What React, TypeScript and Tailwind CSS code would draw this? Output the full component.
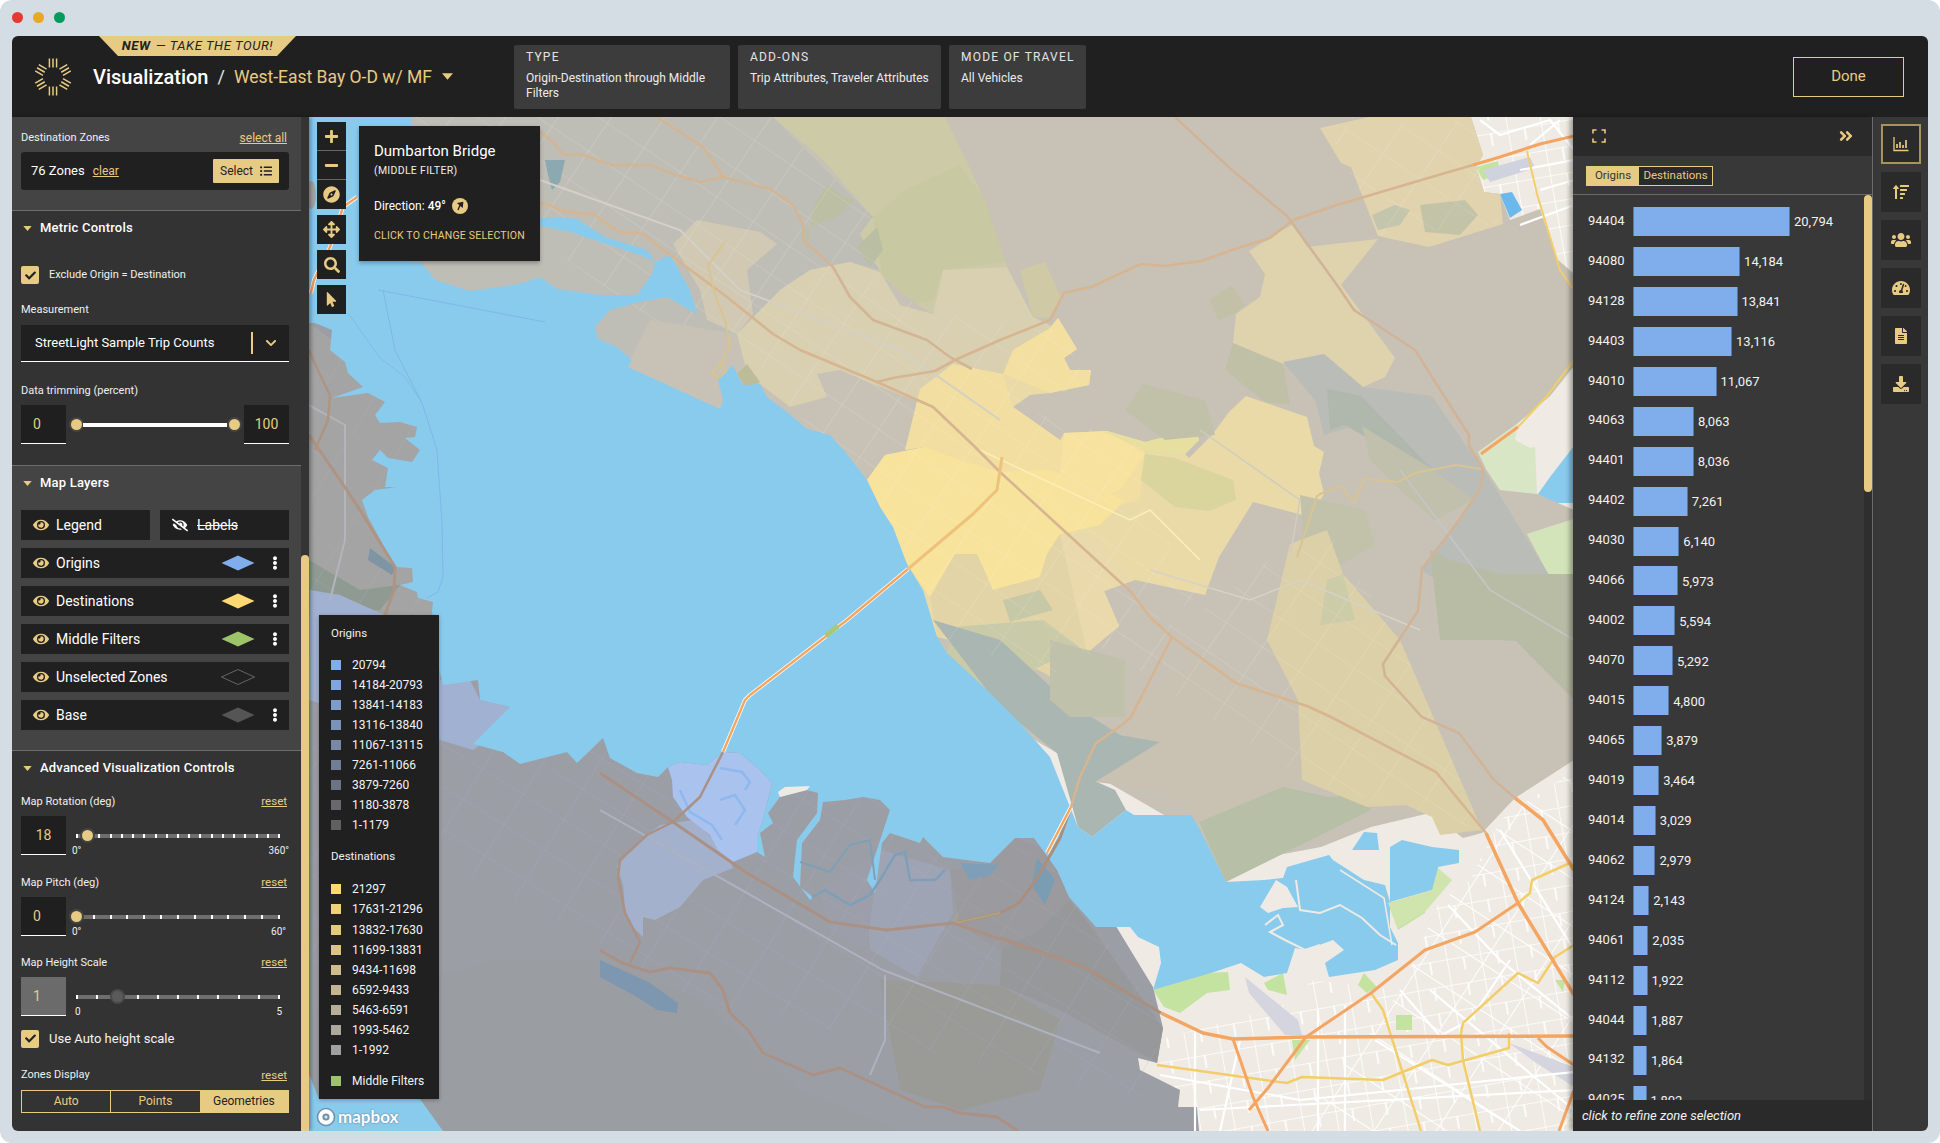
import { ReactNode } from "react";
import {
  FaPlus, FaMinus, FaCompass, FaArrowsAlt, FaSearch, FaMousePointer, FaEye, FaEyeSlash,
  FaEllipsisV, FaCheck, FaChevronDown, FaListUl, FaAngleDoubleRight, FaSortAmountUp,
  FaUsers, FaTachometerAlt, FaFileAlt, FaDownload,
} from "react-icons/fa";

const water =
  "309,117 412,117 412,262 421,262 435,280 470,291 520,284 540,277 557,289 600,295 637,295 652,274 655,262 670,255 690,290 697,314 667,297 640,302 610,310 595,327 598,339 617,347 632,360 628,367 720,409 723,400 718,380 733,365 737,374 743,385 760,384 767,397 787,412 807,429 830,435 847,454 867,480 880,507 893,527 907,564 923,590 937,637 947,653 990,693 1017,720 1050,757 1078,827 1092,837 1126,810 1134,815 1191,815 1199,828 1226,882 1264,880 1283,878 1287,867 1329,855 1333,860 1364,880 1385,885 1390,902 1432,890 1438,885 1438,867 1459,863 1459,850 1432,847 1402,840 1390,847 1390,927 1398,943 1398,960 1375,970 1329,977 1325,963 1344,950 1333,940 1306,950 1295,948 1287,973 1264,977 1241,963 1214,972 1153,990 1161,963 1159,947 1138,937 1130,927 1096,927 1078,907 1069,897 1057,870 1034,838 1015,838 990,863 943,857 923,837 920,843 890,833 882,843 875,893 867,880 890,810 880,800 863,797 845,800 823,802 820,820 802,843 800,887 813,897 810,900 793,877 797,840 817,813 818,793 807,790 780,797 768,813 773,823 760,833 765,857 757,852 757,837 763,820 772,783 760,770 740,753 723,752 707,765 680,762 668,767 658,777 637,773 610,758 603,738 577,763 567,752 520,764 503,752 473,744 510,707 480,700 478,680 443,685 439,669 436,640 432,612 433,602 418,598 417,592 400,585 413,582 412,568 395,567 368,517 362,500 375,490 397,487 385,487 388,468 372,460 380,450 388,458 412,462 420,450 405,438 415,437 417,427 400,422 380,423 375,415 385,402 368,393 332,398 363,387 348,373 345,362 330,350 332,330 315,323 309,323";

const hills =
  "309,117 1471,117 1483,155 1476,167 1484,192 1500,194 1510,220 1540,209 1557,259 1574,274 1574,366 1550,396 1518,423 1478,452 1486,469 1500,490 1537,494 1574,510 1574,519 1527,534 1557,590 1574,590 1574,760 1515,798 1482,833 1463,838 1430,813 1371,827 1321,847 1268,857 1226,882 1190,830 1000,720 760,500 600,420 400,300 309,200";

const west =
  "309,300 440,420 440,660 600,700 1030,800 1100,900 1153,987 1163,1028 1157,1063 1138,1058 1140,1070 1180,1090 1178,1107 1197,1107 1199,1131 309,1131";

const zones: [string, string][] = [
  // north, oakland side
  ["412,117 773,117 873,217 880,270 850,262 810,270 780,290 737,334 650,320 600,420 400,300", "#bfbeb6"],
  ["773,117 945,117 980,190 1007,267 943,270 933,314 917,304 883,277 860,234 873,217 823,160", "#cdcaa8"],
  ["873,217 905,190 960,165 985,200 1005,262 943,270 933,300 917,304 883,277", "#c8c8a2"],
  ["673,244 697,220 760,232 777,244 747,270 753,314 737,334 707,320 700,290", "#d1c9b4"],
  ["737,334 780,290 810,270 850,262 880,272 900,305 933,314 943,270 1007,267 1033,317 1060,330 1013,350 1003,374 953,364 920,389 933,407 873,384 840,370 817,374 827,397 790,407 760,384 745,365", "#d9cfb1"],
  ["1020,270 1045,262 1062,300 1050,318 1033,317", "#cfc9a6"],
  ["807,250 803,230 837,217 855,200 842,196 827,184 813,207", "#bcbfa3"],
  ["857,247 877,227 883,250 870,267", "#babea2"],
  ["737,374 747,364 760,382 747,389", "#bdbc98"],
  // yellow destinations
  ["920,389 953,364 1003,374 1013,350 1050,328 1058,318 1077,349 1064,358 1070,370 1091,370 1089,385 1050,393 1030,395 1013,407 1060,440 1064,433 1107,431 1145,442 1195,429 1199,440 1185,454 1189,458 1212,435 1229,412 1246,396 1307,417 1314,446 1324,452 1319,473 1324,494 1310,517 1253,502 1219,557 1205,595 1135,580 1104,591 1119,626 1087,653 1050,676 1000,650 937,637 907,564 867,480 885,455 925,447 933,407", "#e9daa8"],
  ["920,389 953,364 1003,374 1013,407 1060,440 1107,431 1145,442 1140,500 1060,520 960,460 925,447 905,450", "#f2dea0"],
  ["1050,328 1058,318 1077,349 1064,358 1070,370 1091,370 1089,385 1050,393 1003,374 1013,350", "#f3dfa0"],
  ["867,480 885,455 925,447 960,460 1000,472 1050,470 1125,500 1100,525 1060,534 1047,554 1040,577 993,590 977,554 955,554 930,597 907,564", "#f8e39c"],
  ["1064,433 1107,431 1145,454 1120,490 1072,510 1060,470", "#f7e2a0"],
  ["1145,454 1175,458 1233,480 1236,500 1209,511 1175,507 1141,480", "#d9d59d"],
  ["1100,430 1145,442 1195,429 1199,440 1185,454 1150,452", "#e6df9f"],
  ["930,597 955,554 977,554 993,590 1040,577 1047,554 1060,534 1087,560 1087,653 1050,676 985,640 937,637", "#e2d4a7"],
  ["1060,534 1094,538 1135,580 1104,591 1119,626 1087,653", "#ead9aa"],
  ["953,627 1043,620 1080,647 1033,670 1000,670 990,693 947,653", "#c8caa8"],
  ["1003,600 1040,590 1053,610 1010,622", "#c6c8a6"],
  // grey teal salt flats below
  ["933,620 1000,640 1065,700 1120,735 1160,742 1097,782 1115,790 1126,810 1092,837 1078,827 1057,753 1000,707", "#a9b6b2"],
  ["1130,700 1200,660 1250,690 1298,700 1302,780 1199,822 1165,790 1095,782 1160,742 1120,735", "#c9c1b2"],
  ["1199,822 1283,787 1329,797 1360,795 1371,810 1226,882", "#b7c0a6"],
  // upper right tan zones
  ["1320,128 1369,117 1471,117 1483,155 1476,167 1484,192 1500,194 1503,224 1429,247 1378,236 1351,167 1341,163", "#e0d3ae"],
  ["1249,251 1293,224 1307,247 1378,239 1341,285 1395,358 1385,377 1363,387 1324,354 1283,364 1233,343 1236,314 1260,297 1265,274", "#dfd3ae"],
  ["1233,343 1283,364 1290,405 1265,402 1225,370", "#c0c0a6"],
  ["1210,300 1232,285 1245,305 1235,314 1218,320", "#c2c1a8"],
  ["1283,362 1324,354 1363,387 1432,396 1469,450 1486,473 1557,588 1574,611 1574,641 1506,641 1450,590 1420,569 1473,500 1432,469 1358,425 1324,435 1315,400", "#babcb8"],
  ["1327,389 1361,396 1432,469 1405,460 1345,425 1330,430", "#b0b8ae"],
  ["1362,426 1432,469 1473,500 1435,520 1400,490 1370,460", "#c0c0ac"],
  ["1430,550 1450,560 1500,574 1574,574 1574,700 1515,640 1440,640", "#b9bca5"],
  ["1300,495 1365,510 1375,545 1340,565 1305,555", "#c2c2aa"],
  ["1143,384 1205,400 1215,435 1165,440 1125,410", "#c1c1aa"],
  ["1327,530 1343,574 1400,640 1482,830 1440,835 1432,817 1406,805 1367,807 1302,780 1298,700 1267,640 1290,544", "#dcd0a8"],
  ["1327,580 1343,574 1355,620 1320,625", "#cccca8"],
  ["1420,205 1465,200 1478,215 1460,235 1425,232", "#c3c3a8"],
  ["1372,215 1395,205 1410,210 1400,225 1378,230", "#c3c5ad"],
  ["1050,640 1125,660 1125,717 1070,717 1050,700", "#bfc1aa"],
];

const westZones: [string, string][] = [
  ["309,323 440,420 440,640 309,640", "#a4a4a4"],
  ["309,560 360,590 400,585 380,610 309,615", "#8f9b92"],
  ["600,960 700,1000 800,1090 900,1131 309,1131 309,1010 500,960", "#9a9da2"],
  ["880,980 1000,985 1060,1020 1040,1090 960,1110 900,1090", "#9a9b96"],
  ["1020,840 1090,925 1163,1028 1157,1063 1060,1010 1000,985 1005,880", "#97989a"],
  ["950,870 990,863 1015,838 1050,850 1070,900 1040,930 1000,950 960,925", "#9a9a9f"],
  ["880,850 950,870 953,913 917,977 870,950 866,890", "#9fa4b5"],
  ["820,890 880,850 866,950 830,930", "#9c9fa9"],
];

const roads: [string, string, number][] = [
  ["540,132 553,142 563,154 583,155 612,165 650,165 673,174 700,182 723,177 770,189 793,205 803,224 803,240 833,267 850,297 873,320 927,340 950,357 972,369", "#d2b595", 2.6],
  ["657,117 703,147 717,167 723,177", "#d2b595", 2.6],
  ["540,202 567,212 593,214 607,224 620,232 643,234 673,257 727,297 773,334 800,350 877,382 933,407 973,445 1000,472 1060,527 1131,592 1151,618 1172,637 1236,683 1307,706 1331,717 1436,772 1486,833", "#d6b590", 2.6],
  ["877,382 893,378 935,371 955,360 1000,340 1050,320 1064,293 1091,287 1141,264 1165,266 1202,261 1229,251 1270,238 1293,220 1337,205 1435,176 1473,165", "#d6b590", 2.6],
  ["1175,117 1233,171 1287,216 1337,285 1354,310 1415,350 1432,377 1469,435 1469,446 1483,469 1481,488 1452,530 1422,569 1418,611 1383,664 1385,676 1422,717 1459,733 1494,780 1515,798", "#d1b498", 2.6],
  ["1172,637 1131,717 1122,725 1096,743 1080,777 1071,807", "#d6b590", 2.6],
  ["1297,557 1317,496 1320,494 1341,486 1354,503 1364,479 1398,482 1415,473 1456,465 1481,469", "#d8c493", 2],
  ["1002,457 997,490 973,514 908,569", "#efc27c", 3],
  ["725,242 708,265 715,295 725,320 730,345 720,365 712,372 718,378 726,372 722,362", "#d8c48e", 2],
  ["1000,938 1084,967 1161,1013", "#a98f7e", 3],
  ["1071,807 1060,838 1036,880 1019,903 1000,913 955,923", "#a98f7e", 3],
  ["1000,913 955,923 957,915", "#b2a27c", 2],
  ["600,773 673,822 747,873 830,922 887,930 953,923 1083,967 1100,975", "#ab9184", 3],
  ["600,950 622,963 650,972 670,968 710,973 723,990 730,1013 748,1030 763,1053 813,1075 840,1068 925,1107 943,1107 960,1113 997,1117 1018,1131", "#ab9184", 3],
  ["723,752 700,797 673,822 647,835 620,860 618,877 625,913 640,942 630,963", "#ab9184", 2.5],
  ["309,350 320,375 330,395 328,420 315,450", "#ae9482", 2.5],
  ["309,435 340,480 360,510 395,567 394,590 385,615", "#ae9482", 3],
];

const orange: [string, number][] = [
  ["1473,165 1500,157 1540,144 1574,136", 3],
  ["1486,833 1518,903 1574,995", 3.5],
  ["1515,798 1543,820 1574,870", 3.5],
  ["1161,1013 1203,1033 1233,1039 1306,1037 1574,1036", 3.5],
  ["1233,1039 1253,1097 1268,1131", 3],
  ["1306,1037 1268,1088 1249,1110", 3],
  ["1306,1037 1371,993 1425,950 1475,932 1518,903", 3],
  ["1538,1038 1547,1047 1574,1065", 3],
  ["1574,1090 1559,1131", 3],
  ["1481,454 1518,427", 3],
];

const yellow: [string, number][] = [
  ["1527,151 1537,194 1560,270 1574,290", 2],
  ["1518,427 1547,396 1574,360", 2],
  ["1157,1065 1287,1083 1302,1077 1383,1080 1432,1060 1448,1065 1509,1048 1509,1033", 2.5],
  ["1371,993 1383,1010 1421,1131", 2.5],
  ["1461,1033 1463,1023 1518,973 1538,983 1555,957 1574,945", 2.5],
  ["1461,1033 1463,1060 1480,1131", 2.5],
  ["1570,863 1532,880 1530,893 1518,903", 2.5],
];

const whiteRoads = [
  "1160,1075 1300,1100 1400,1090 1574,1072",
  "1195,1028 1195,1131", "1240,1040 1220,1131", "1318,1010 1318,1131", "1345,1005 1345,1131",
  "1375,1040 1520,1131", "1430,990 1574,1110", "1400,990 1440,1036 1470,1020 1510,960",
  "1448,905 1500,960 1574,1020", "1500,830 1574,950", "1200,1110 1574,1090",
  "1480,120 1500,135 1550,120 1574,150", "1540,190 1574,180", "1520,170 1574,160", "1520,225 1574,205", "1560,120 1530,145",
];

const greens = [
  "1153,990 1203,973 1228,972 1230,990 1207,993 1180,1013 1164,1007",
  "1264,983 1283,973 1287,995 1268,990",
  "1364,973 1377,987 1367,993 1358,985",
  "1388,903 1429,893 1425,913 1398,930",
  "1292,1040 1310,1040 1295,1060",
  "1396,1015 1412,1015 1412,1030 1396,1030",
  "1476,167 1498,161 1500,174 1483,180",
  "1530,300 1536,300 1536,312 1530,312",
  "1555,980 1565,980 1563,992",
];

const Map = () => (
  <svg viewBox="309 117 1264 1014" className="absolute inset-0 w-full h-full">
    <defs>
      <pattern id="streets" width="34" height="26" patternUnits="userSpaceOnUse" patternTransform="rotate(-10)">
        <path d="M0 0H34M0 0V26M17 0V13" stroke="#fff" strokeWidth="1.6" fill="none" />
      </pattern>
      <pattern id="streetsB" width="52" height="40" patternUnits="userSpaceOnUse" patternTransform="rotate(33)">
        <path d="M0 0H52M0 0V40" stroke="#fff" strokeWidth="1.8" fill="none" />
      </pattern>
      <pattern id="pale" width="44" height="34" patternUnits="userSpaceOnUse" patternTransform="rotate(34)">
        <path d="M0 0H44M0 0V34" stroke="#fff" strokeOpacity=".2" strokeWidth="1.2" fill="none" />
      </pattern>
      <pattern id="slate" width="48" height="36" patternUnits="userSpaceOnUse" patternTransform="rotate(32)">
        <path d="M0 0H48M0 0V36" stroke="#adb2c2" strokeOpacity=".35" strokeWidth="1.2" fill="none" />
      </pattern>
    </defs>
    <rect x="309" y="117" width="1264" height="1014" fill="#efebe4" />
    <polygon points="1160,1040 1300,1000 1310,980 1400,990 1440,900 1470,880 1500,820 1574,770 1574,1131 1160,1131" fill="url(#streets)" />
    <polygon points="1400,990 1440,900 1470,880 1500,820 1574,770 1574,1131 1300,1131" fill="url(#streetsB)" />
    <polygon points="1471,117 1574,117 1574,274 1557,259 1540,209 1510,220 1500,194 1484,192" fill="url(#streets)" />
    <polygon points="1518,423 1574,360 1574,400 1545,425 1535,443 1537,494 1500,490 1486,469 1478,452" fill="#d9e6c6" />
    <polygon points="1518,423 1550,396 1574,366 1574,440 1545,445 1530,448 1515,440" fill="#efebe4" />
    <polygon points="1527,534 1574,519 1574,590 1557,590" fill="#d3e4bb" />
    <polygon points="1538,494 1550,477 1574,446 1574,503 1544,503" fill="#89cbed" />
    {greens.map((p, i) => <polygon key={i} points={p} fill="#c5e3a0" />)}
    <polygon points="1245,977 1298,1020 1302,1035 1285,1035 1249,993" fill="#d4d5df" />
    <polygon points="1509,1043 1574,1067 1574,1087 1536,1063" fill="#d4d5df" />
    <polygon points="1483,170 1530,157 1535,168 1490,182" fill="#cfd3de" />
    <polygon points="1500,194 1512,192 1522,210 1510,218" fill="#6bb9ec" />

    <polygon points={hills} fill="#c8c2b6" />
    {zones.map(([p, c], i) => <polygon key={i} points={p} fill={c} />)}
    <polygon points="540,240 412,230 412,117 773,117 873,217 880,270 810,270 737,334 650,320" fill="url(#pale)" />
    <polygon points="737,334 780,290 850,262 933,314 1060,330 1089,385 1013,407 1145,442 1140,500 1205,595 1050,676 937,637 867,480 790,407" fill="url(#pale)" />
    <polygon points="1290,544 1327,530 1400,640 1482,830 1302,780 1180,700 1100,640 1190,620" fill="url(#pale)" />
    <polygon points="1330,130 1471,117 1500,224 1378,236" fill="url(#pale)" />

    <polygon points={west} fill="#9c9ea6" />
    {westZones.map(([p, c], i) => <polygon key={i} points={p} fill={c} />)}
    <polygon points="309,323 440,420 440,1000 309,1000" fill="url(#slate)" />
    <polygon points="440,660 600,700 1030,810 1160,1020 1150,1100 700,1000 440,860" fill="url(#slate)" />
    <polygon points="640,840 660,825 693,820 725,850 733,868 703,880 680,907 655,920 643,917 643,937 633,927 625,910 623,885 617,866" fill="#a3b1cd" />
    <polygon points="310,590 340,595 440,640 440,680 470,680 480,700 510,707 480,745 473,750 440,740 309,700" fill="#a1b1d1" />
    <polygon points="668,767 680,762 707,765 723,752 740,753 760,770 772,783 763,820 757,837 757,852 733,862 718,850 710,835 687,817 673,797 672,780" fill="#a9c3ee" />

    <polygon points={water} fill="#89cbed" />
    <polygon points="309,1074 319,1099 420,1099 443,1131 309,1131" fill="#89cbed" />
    <polyline points="720,768 742,772 750,782 745,790" fill="none" stroke="#8fb9ee" strokeWidth="2.5" />
    <polyline points="680,790 690,812 712,825 722,840" fill="none" stroke="#8fb9ee" strokeWidth="2.5" />
    <polyline points="720,800 735,795 745,810 735,825" fill="none" stroke="#8fb9ee" strokeWidth="2.5" />
    <polygon points="1260,907 1276,880 1287,887 1298,907 1283,908 1268,913" fill="#efebe4" />
    <polygon points="1352,850 1364,832 1377,833 1379,850" fill="#89cbed" />
    <polygon points="1388,903 1432,890 1438,868 1452,880 1425,912 1398,928" fill="#cfe5ad" />
    <polygon points="780,797 807,790 810,786 785,787 778,792" fill="#efebe4" />
    <polyline points="1296,880 1300,910 1320,913 1340,905 1362,918 1380,935 1396,945" fill="none" stroke="#efebe4" strokeWidth="2" />
    <polyline points="1265,925 1278,915 1283,925 1270,932 1285,940 1305,950 1320,945" fill="none" stroke="#efebe4" strokeWidth="2" />
    <polyline points="1340,870 1384,898 1392,945" fill="none" stroke="#efebe4" strokeWidth="1.5" />
    <polyline points="383,290 395,350 422,403 437,450 442,523 443,577 438,592 427,598" fill="none" stroke="#7fb8e4" strokeWidth="1" />
    <polyline points="378,290 545,322" fill="none" stroke="#7fb8e4" strokeWidth="1" />
    <polyline points="348,313 380,358 405,377 422,403" fill="none" stroke="#7fb8e4" strokeWidth=".8" />
    <polygon points="600,960 650,983 678,1003 677,1013 657,1010 637,997 600,977" fill="#7e97b0" />
    <polygon points="1037,858 1055,880 1045,905 1032,885" fill="#7b9db3" />
    <polygon points="370,548 395,567 392,575 368,560" fill="#7e95a4" />
    <polyline points="800,862 830,872 850,845 870,840 875,880" fill="none" stroke="#7f9fb9" strokeWidth="2" />
    <polyline points="812,897 825,890 850,905 870,895 880,880 895,855 905,852 910,880 935,880 945,870" fill="none" stroke="#7f9fb9" strokeWidth="2.5" />
    <polygon points="960,863 1000,865 990,875 970,880" fill="#7f9fb9" />
    <polygon points="560,217 577,219 605,237 647,250 655,262 640,255 600,242 570,232 540,226 540,218" fill="#89cbed" />
    <polygon points="545,160 565,160 560,182 552,190 548,175" fill="#8ca9b2" />

    <polyline points="600,810 883,970 1100,1053" fill="none" stroke="#adb2c0" strokeWidth="2" />
    <polyline points="309,405 345,425 345,540 330,600" fill="none" stroke="#b3b4bc" strokeWidth="2" />
    <polyline points="885,975 885,1040 870,1075" fill="none" stroke="#adb2c0" strokeWidth="2" />
    <polyline points="540,180 680,230 740,290 900,350 1000,420" fill="none" stroke="#d3d0c6" strokeWidth="2" />
    <polyline points="1400,470 1490,590 1574,640" fill="none" stroke="#c5c6c8" strokeWidth="1.5" />
    <polyline points="1150,570 1250,600 1300,580 1420,630" fill="none" stroke="#d6d2c5" strokeWidth="1.5" />
    <polyline points="1200,430 1300,500 1290,555" fill="none" stroke="#d0ccc0" strokeWidth="1.5" />
    <polyline points="980,450 1130,520 1150,510 1200,560" fill="none" stroke="#fbeeb9" strokeWidth="1.5" />

    {whiteRoads.map((p, i) => <polyline key={i} points={p} fill="none" stroke="#fff" strokeWidth="2.2" />)}
    {roads.map(([p, c, w], i) => <polyline key={i} points={p} fill="none" stroke={c} strokeWidth={w} strokeLinejoin="round" />)}
    {yellow.map(([p, w], i) => <polyline key={i} points={p} fill="none" stroke="#f2cd68" strokeWidth={w} strokeLinejoin="round" />)}
    {orange.map(([p, w], i) => <polyline key={i} points={p} fill="none" stroke="#f4a562" strokeWidth={w} strokeLinejoin="round" />)}

    <polyline points="723,752 745,700 750,695 847,620 908,569" fill="none" stroke="#fff" strokeWidth="4" strokeLinejoin="round" />
    <polyline points="723,752 745,700 750,695 847,620 908,569" fill="none" stroke="#f2a55e" strokeWidth="2.4" strokeLinejoin="round" />
    <polyline points="826,636 838,626" fill="none" stroke="#a7c878" strokeWidth="5" />
    <polyline points="1047,853 1071,807" fill="none" stroke="#fff" strokeWidth="4" />
    <polyline points="1047,853 1071,807" fill="none" stroke="#f2a55e" strokeWidth="2.4" />
    <polyline points="357,197 343,207 330,247 314,280 311,293" fill="none" stroke="#fff" strokeWidth="4" />
    <polyline points="357,197 343,207 330,247 314,280 311,293" fill="none" stroke="#ee9f62" strokeWidth="2.5" />
    <ellipse cx="311" cy="195" rx="5" ry="14" fill="#a4a4a4" />
  </svg>
);

const Gold = "#e8cb83";

const Caret = ({ className = "" }: { className?: string }) => (
  <svg viewBox="0 0 10 6" className={className}><polygon points="0,0 10,0 5,6" fill={Gold} /></svg>
);

const Logo = () => (
  <svg viewBox="-18 -18 36 36" className="w-[38px] h-[38px] shrink-0">
    {[0, 60, 120, 180, 240, 300].map((a) => (
      <g key={a} transform={`rotate(${a})`} stroke={Gold} strokeWidth="1.4">
        <line x1="-3.4" y1="-17.5" x2="-3.4" y2="-9" />
        <line x1="0" y1="-17.5" x2="0" y2="-9" />
        <line x1="3.4" y1="-17.5" x2="3.4" y2="-9" />
      </g>
    ))}
  </svg>
);

const InfoCard = ({ w, title, children }: { w: string; title: string; children: ReactNode }) => (
  <div className={`${w} h-[64px] bg-[#3c3c3c] rounded-[2px] pl-[12px] pt-[5px]`}>
    <div className="text-[12px] leading-[14px] tracking-[1.2px] text-[#e4e4e4] whitespace-nowrap">{title}</div>
    <div className="mt-[7px] text-[12px] leading-[15px] text-[#ececec] pr-[8px]">{children}</div>
  </div>
);

const Header = () => (
  <header className="relative h-[81px] bg-[#202020] flex items-center shrink-0">
    <svg viewBox="0 0 197 20" className="absolute left-[87px] top-0 w-[197px] h-[20px]"><polygon points="0,0 197,0 178,20 19,20" fill={Gold} /></svg>
    <div className="absolute left-[87px] top-0 w-[197px] h-[20px] flex items-center justify-center text-[13px] italic tracking-[.6px] text-[#222]">
      <b className="font-bold mr-[5px]">NEW</b> — TAKE THE TOUR!
    </div>
    <div className="ml-[22px]"><Logo /></div>
    <div className="ml-[21px] w-[421px] flex items-center">
      <span className="text-[20px] font-medium text-white">Visualization</span>
      <span className="ml-[9px] text-[18px] text-[#e6e6e6]">/</span>
      <span className="ml-[9px] mt-[1px] text-[17.5px] text-[#e8cb83]">West-East Bay O-D w/ MF</span>
      <Caret className="ml-[10px] w-[11px] h-[7px]" />
    </div>
    <div className="flex gap-[8px]">
      <InfoCard w="w-[216px]" title="TYPE">Origin-Destination through Middle Filters</InfoCard>
      <InfoCard w="w-[203px]" title="ADD-ONS"><span className="whitespace-nowrap">Trip Attributes, Traveler Attributes</span></InfoCard>
      <InfoCard w="w-[137px]" title="MODE OF TRAVEL">All Vehicles</InfoCard>
    </div>
    <button className="ml-auto mr-[24px] w-[111px] h-[40px] border border-[#e8cb83] text-[15px] text-[#e8cb83]">Done</button>
  </header>
);

const Check = ({ className = "" }: { className?: string }) => (
  <div className={`w-[18px] h-[18px] rounded-[2px] bg-[#e8cb83] flex items-center justify-center shrink-0 ${className}`}>
    <FaCheck className="text-[#222] text-[11px]" />
  </div>
);

const SectionHead = ({ title }: { title: string }) => (
  <div className="h-[18px] flex items-center">
    <Caret className="w-[9px] h-[5px] ml-[2px]" />
    <span className="ml-[8px] text-[13px] font-medium tracking-[.2px] text-white">{title}</span>
  </div>
);

const LabelRow = ({ label, link, className = "" }: { label: string; link: string; className?: string }) => (
  <div className={`h-[14px] flex items-center justify-between text-[11px] text-[#f0f0f0] ${className}`}>
    <span>{label}</span>
    <a className="text-[11.5px] underline text-[#e8cb83] mr-[2px]">{link}</a>
  </div>
);

const NumInput = ({ value, disabled = false, center = true }: { value: string; disabled?: boolean; center?: boolean }) => (
  <div className={`w-[45px] h-[39px] shrink-0 border-b border-white flex items-center text-[14px] text-[#e8cb83] ${disabled ? "bg-[#6b6b6b]" : "bg-[#1f1f1f]"} ${center ? "justify-center" : "pl-[12px]"}`}>
    {value}
  </div>
);

const TickSlider = ({ ticks, thumb, left, right, gray = false }: { ticks: number; thumb: number; left: string; right: string; gray?: boolean }) => (
  <div className="ml-[6px] flex-1 h-[39px]">
    <div className="relative mt-[18px] ml-[4px] mr-[9px] h-[4px] bg-[#6e6e6e] flex justify-between">
      {Array.from({ length: ticks }).map((_, i) => <span key={i} className="w-[2px] h-[4px] bg-white" />)}
      <span
        className={`absolute top-[-4px] w-[11px] h-[11px] rounded-full ring-[2px] ${gray ? "bg-[#5a5a5a] ring-[#4a4a4a]" : "bg-[#e8cb83] ring-[#444]"}`}
        style={{ left: thumb - 5.5 }}
      />
    </div>
    <div className="mt-[7px] flex justify-between text-[10px] leading-[12px] text-[#f0f0f0]">
      <span className={gray ? "ml-[3px]" : ""}>{left}</span>
      <span className={gray ? "mr-[7px]" : right === "60°" ? "mr-[3px]" : ""}>{right}</span>
    </div>
  </div>
);

const Diamond = ({ fill, stroke = "none" }: { fill: string; stroke?: string }) => (
  <svg viewBox="0 0 34 16" className="w-[34px] h-[16px] shrink-0"><polygon points="0.5,8 17,0.5 33.5,8 17,15.5" fill={fill} stroke={stroke} strokeWidth="1" /></svg>
);

const LayerRow = ({ name, fill, stroke, kebab = true }: { name: string; fill: string; stroke?: string; kebab?: boolean }) => (
  <div className="h-[30px] bg-[#202020] flex items-center pl-[12px] text-[14px] text-white">
    <FaEye className="text-[#e8cb83] text-[16px] shrink-0" />
    <span className="ml-[7px]">{name}</span>
    <span className="ml-auto mr-[5px]"><Diamond fill={fill} stroke={stroke} /></span>
    <span className="w-[29px] flex justify-center">{kebab && <FaEllipsisV className="text-white text-[14px]" />}</span>
  </div>
);

const Sidebar = () => (
  <div className="w-[297px] shrink-0 flex relative z-10 shadow-[2px_0_4px_rgba(0,0,0,.35)]">
    <aside className="w-[289px] flex flex-col">
      <section className="h-[94px] bg-[#444] border-b border-[#6e6e6e] pl-[9px] pr-[12px] pt-[13px]">
        <div className="h-[16px] flex items-center justify-between text-[11px] text-[#f0f0f0]">
          <span>Destination Zones</span>
          <a className="text-[12px] underline text-[#e8cb83] mr-[2px]">select all</a>
        </div>
        <div className="mt-[6px] h-[38px] bg-[#202020] rounded-[3px] flex items-center pl-[10px] pr-[10px]">
          <span className="text-[13px] text-white">76 Zones</span>
          <a className="ml-[8px] text-[12px] underline text-[#e8cb83]">clear</a>
          <button className="ml-auto w-[66px] h-[24px] bg-[#e8cb83] rounded-[1px] flex items-center justify-center gap-[7px] text-[12px] text-[#222]">
            Select <FaListUl className="text-[12px]" />
          </button>
        </div>
      </section>

      <section className="h-[255px] bg-[#333] border-b border-[#6e6e6e] pl-[9px] pr-[12px] pt-[8px]">
        <SectionHead title="Metric Controls" />
        <div className="mt-[29px] flex items-center">
          <Check />
          <span className="ml-[10px] text-[11px] text-[#f0f0f0]">Exclude Origin = Destination</span>
        </div>
        <div className="mt-[19px] h-[14px] flex items-center text-[11px] text-[#f0f0f0]">Measurement</div>
        <div className="mt-[8px] h-[37px] bg-[#202020] border-b border-white flex items-center pl-[14px]">
          <span className="text-[13px] text-white">StreetLight Sample Trip Counts</span>
          <span className="ml-auto w-[2px] h-[22px] bg-[#e8cb83]" />
          <span className="w-[36px] flex justify-center"><FaChevronDown className="text-[#e8cb83] text-[12px]" /></span>
        </div>
        <div className="mt-[22px] h-[14px] flex items-center text-[11px] text-[#f0f0f0]">Data trimming (percent)</div>
        <div className="mt-[7px] flex">
          <NumInput value="0" center={false} />
          <div className="flex-1 flex items-center pl-[4.5px] pr-[4.5px] gap-[1.5px]">
            <span className="w-[11px] h-[11px] rounded-full bg-[#e8cb83] ring-[2px] ring-[#444] shrink-0" />
            <span className="flex-1 h-[4px] bg-white" />
            <span className="w-[11px] h-[11px] rounded-full bg-[#e8cb83] ring-[2px] ring-[#444] shrink-0" />
          </div>
          <NumInput value="100" />
        </div>
      </section>

      <section className="h-[285px] bg-[#444] border-b border-[#6e6e6e] pl-[9px] pr-[12px] pt-[8px]">
        <SectionHead title="Map Layers" />
        <div className="mt-[18px] flex gap-[10px]">
          <div className="w-[129px] h-[30px] bg-[#202020] flex items-center pl-[12px] text-[14px] text-white">
            <FaEye className="text-[#e8cb83] text-[16px]" /><span className="ml-[7px]">Legend</span>
          </div>
          <div className="w-[129px] h-[30px] bg-[#202020] flex items-center pl-[12px] text-[14px] text-white">
            <FaEyeSlash className="text-white text-[16px]" /><span className="ml-[9px] line-through">Labels</span>
          </div>
        </div>
        <div className="mt-[8px] flex flex-col gap-[8px]">
          <LayerRow name="Origins" fill="#80adec" />
          <LayerRow name="Destinations" fill="#fdd873" />
          <LayerRow name="Middle Filters" fill="#9dc36b" />
          <LayerRow name="Unselected Zones" fill="none" stroke="#666" kebab={false} />
          <LayerRow name="Base" fill="#555" />
        </div>
      </section>

      <section className="flex-1 bg-[#333] pl-[9px] pr-[12px] pt-[8px]">
        <SectionHead title="Advanced Visualization Controls" />
        <LabelRow label="Map Rotation (deg)" link="reset" className="mt-[18px]" />
        <div className="mt-[7px] flex h-[39px]">
          <NumInput value="18" />
          <TickSlider ticks={19} thumb={11} left="0°" right="360°" />
        </div>
        <LabelRow label="Map Pitch (deg)" link="reset" className="mt-[21px]" />
        <div className="mt-[7px] flex h-[39px]">
          <NumInput value="0" center={false} />
          <TickSlider ticks={13} thumb={0} left="0°" right="60°" />
        </div>
        <LabelRow label="Map Height Scale" link="reset" className="mt-[20px]" />
        <div className="mt-[7px] flex h-[39px]">
          <NumInput value="1" disabled center={false} />
          <TickSlider ticks={11} thumb={41} left="0" right="5" gray />
        </div>
        <div className="mt-[13px] flex items-center">
          <Check />
          <span className="ml-[10px] text-[13px] text-[#f4f4f4]">Use Auto height scale</span>
        </div>
        <LabelRow label="Zones Display" link="reset" className="mt-[20px]" />
        <div className="mt-[7px] h-[23px] flex text-[12px] border border-[#e8cb83]">
          <div className="flex-1 flex items-center justify-center text-[#e8cb83] border-r border-[#e8cb83]">Auto</div>
          <div className="flex-1 flex items-center justify-center text-[#e8cb83]">Points</div>
          <div className="flex-1 flex items-center justify-center bg-[#e8cb83] text-[#222]">Geometries</div>
        </div>
      </section>
    </aside>
    <div className="w-[8px] bg-[#343434] pt-[438px]">
      <div className="h-full bg-[#e8cb83] rounded-t-[4px]" />
    </div>
  </div>
);

const ToolBtn = ({ children, border = false }: { children: ReactNode; border?: boolean }) => (
  <div className={`w-[29px] h-[29px] bg-[#202020] flex items-center justify-center text-[#e8cb83] ${border ? "border-b border-[#666]" : ""}`}>{children}</div>
);

const MapTools = () => (
  <div className="absolute left-[8px] top-[5px] flex flex-col gap-[6px]">
    <div className="flex flex-col">
      <ToolBtn border><FaPlus className="text-[15px]" /></ToolBtn>
      <ToolBtn border><FaMinus className="text-[15px]" /></ToolBtn>
      <ToolBtn><FaCompass className="text-[17px]" /></ToolBtn>
    </div>
    <ToolBtn><FaArrowsAlt className="text-[17px]" /></ToolBtn>
    <ToolBtn><FaSearch className="text-[16px]" /></ToolBtn>
    <ToolBtn><FaMousePointer className="text-[15px]" /></ToolBtn>
  </div>
);

const MapTooltip = () => (
  <div className="absolute left-[50px] top-[9px] w-[181px] h-[135px] bg-[#202020] pl-[15px] pt-[16px] shadow-[0_2px_4px_rgba(0,0,0,.3)]">
    <div className="text-[15px] leading-[18px] text-white">Dumbarton Bridge</div>
    <div className="mt-[4px] text-[10.5px] leading-[14px] tracking-[.3px] text-[#eee]">(MIDDLE FILTER)</div>
    <div className="mt-[19px] flex items-center text-[12px] text-white">
      Direction: <b className="ml-[3px] font-medium">49°</b>
      <span className="ml-[6px] w-[16px] h-[16px] rounded-full bg-[#e8cb83] flex items-center justify-center">
        <svg viewBox="0 0 10 10" className="w-[10px] h-[10px]"><path d="M3 9 L5.4 3.2 M3.4 2.4 L7.6 1.6 L7.2 5.6 Z" stroke="#222" strokeWidth="1.4" fill="#222" /></svg>
      </span>
    </div>
    <div className="mt-[14px] text-[10.5px] leading-[14px] tracking-[.2px] text-[#e8cb83] whitespace-nowrap">CLICK TO CHANGE SELECTION</div>
  </div>
);

const originsLegend: [string, string][] = [
  ["#80adec", "20794"], ["#7fa6de", "14184-20793"], ["#7d9ccb", "13841-14183"], ["#7a93b7", "13116-13840"],
  ["#7889a6", "11067-13115"], ["#727d96", "7261-11066"], ["#6c7384", "3879-7260"], ["#67696f", "1180-3878"], ["#606060", "1-1179"],
];
const destLegend: [string, string][] = [
  ["#fdd873", "21297"], ["#f0d177", "17631-21296"], ["#e4ca7c", "13832-17630"], ["#dac387", "11699-13831"],
  ["#cfbc8b", "9434-11698"], ["#c3b691", "6592-9433"], ["#b8ae98", "5463-6591"], ["#ada79d", "1993-5462"], ["#a0a0a0", "1-1992"],
];

const LegendRow = ({ color, label }: { color: string; label: string }) => (
  <div className="h-[20.05px] flex items-center text-[12px] text-[#f4f4f4]">
    <span className="w-[10px] h-[10px] shrink-0" style={{ backgroundColor: color }} />
    <span className="ml-[11px]">{label}</span>
  </div>
);

const MapLegend = () => (
  <div className="absolute left-[10px] top-[498px] w-[120px] h-[484px] bg-[#202020] pl-[12px] pt-[11px] shadow-[0_1px_4px_rgba(0,0,0,.3)]">
    <div className="text-[11.5px] leading-[14px] text-[#f0f0f0]">Origins</div>
    <div className="mt-[15px]">{originsLegend.map(([c, l]) => <LegendRow key={l} color={c} label={l} />)}</div>
    <div className="mt-[14px] text-[11.5px] leading-[14px] text-[#f0f0f0]">Destinations</div>
    <div className="mt-[16px]">{destLegend.map(([c, l]) => <LegendRow key={l} color={c} label={l} />)}</div>
    <div className="mt-[11px]"><LegendRow color="#9dc36b" label="Middle Filters" /></div>
  </div>
);

const MapboxMark = () => (
  <div className="absolute left-[7px] bottom-[4px] flex items-center text-white">
    <svg viewBox="0 0 20 20" className="w-[20px] h-[20px]">
      <circle cx="10" cy="10" r="8.5" fill="#fff" stroke="#6d93ad" strokeWidth="1.6" />
      <circle cx="10" cy="10" r="3.6" fill="#6d93ad" />
      <path d="M8.4 10h3.2M10 8.4v3.2" stroke="#fff" strokeWidth="1" />
    </svg>
    <span className="ml-[2px] font-['Lato',sans-serif] font-bold text-[17px] leading-[20px] [text-shadow:0_0_2px_#5f88a6,0_0_1px_#5f88a6]">mapbox</span>
  </div>
);

const zips: [string, number][] = [
  ["94404", 20794], ["94080", 14184], ["94128", 13841], ["94403", 13116], ["94010", 11067], ["94063", 8063],
  ["94401", 8036], ["94402", 7261], ["94030", 6140], ["94066", 5973], ["94002", 5594], ["94070", 5292],
  ["94015", 4800], ["94065", 3879], ["94019", 3464], ["94014", 3029], ["94062", 2979], ["94124", 2143],
  ["94061", 2035], ["94112", 1922], ["94044", 1887], ["94132", 1864], ["94025", 1802],
];

const ZipPanel = () => (
  <div className="w-[300px] shrink-0 flex flex-col bg-[#383838] border-r border-[#6a6a6a] relative z-10 shadow-[-3px_0_5px_rgba(0,0,0,.35)]">
    <div className="h-[39px] bg-[#2a2a2a] flex items-center justify-between pl-[19px] pr-[18px] pb-[2px] shrink-0">
      <svg viewBox="0 0 14 14" className="w-[14px] h-[14px]">
        <path d="M1 4.5V1h3.5M9.5 1H13v3.5M13 9.5V13H9.5M4.5 13H1V9.5" fill="none" stroke={Gold} strokeWidth="1.6" />
      </svg>
      <FaAngleDoubleRight className="text-[#e8cb83] text-[16px]" />
    </div>
    <div className="h-[39px] border-b border-[#6a6a6a] pl-[13px] pt-[10px] shrink-0">
      <div className="w-[127px] h-[20px] flex border border-[#e8cb83] text-[11.5px]">
        <div className="w-[52px] bg-[#e8cb83] text-[#333] flex items-center justify-center">Origins</div>
        <div className="flex-1 bg-[#2a2a2a] text-[#e8cb83] flex items-center justify-center">Destinations</div>
      </div>
    </div>
    <div className="flex-1 min-h-0 flex">
      <div className="flex-1 overflow-hidden pt-[12px]">
        {zips.map(([zip, v]) => (
          <div key={zip} className="h-[29px] mb-[10.95px] flex items-center text-[13px]">
            <span className="w-[60px] pl-[15px] text-[#f2f2f2] -mt-[2px]">{zip}</span>
            <span className="h-[29px] bg-[#80adec] border-x border-[#5577aa]" style={{ width: (v / 20794) * 157 }} />
            <span className="ml-[4px] text-[#f2f2f2] mt-[1px]">{v.toLocaleString("en-US")}</span>
          </div>
        ))}
      </div>
      <div className="w-[8px] bg-[#2e2e2e]">
        <div className="h-[297px] bg-[#e8cb83] rounded-[4px]" />
      </div>
    </div>
    <div className="h-[31px] bg-[#2a2a2a] shrink-0 flex items-center pl-[9px] pt-[1px] text-[13px] italic text-[#f2f2f2]">click to refine zone selection</div>
  </div>
);

const RailBtn = ({ children, active = false }: { children: ReactNode; active?: boolean }) => (
  <div className={`w-[40px] h-[40px] bg-[#2a2a2a] flex items-center justify-center text-[#e8cb83] ${active ? "border-2 border-[#a8935a]" : ""}`}>{children}</div>
);

const Rail = () => (
  <div className="w-[55px] shrink-0 bg-[#383838] pl-[8px] pt-[7px] flex flex-col gap-[8px]">
    <RailBtn active>
      <svg viewBox="0 0 16 16" className="w-[16px] h-[16px]">
        <path d="M1 1v13.5h14.5" fill="none" stroke={Gold} strokeWidth="1.3" />
        <path d="M4 8v4M7 6v6M10 9v3M13 4v8" stroke={Gold} strokeWidth="1.7" />
      </svg>
    </RailBtn>
    <RailBtn><FaSortAmountUp className="text-[16px]" /></RailBtn>
    <RailBtn><FaUsers className="text-[20px]" /></RailBtn>
    <RailBtn><FaTachometerAlt className="text-[18px]" /></RailBtn>
    <RailBtn><FaFileAlt className="text-[16px]" /></RailBtn>
    <RailBtn><FaDownload className="text-[16px]" /></RailBtn>
  </div>
);

export default function App() {
  return (
    <div className="w-[1940px] h-[1143px] bg-[#d4dce4] rounded-[12px] flex flex-col font-['Roboto',sans-serif] overflow-hidden">
      <div className="h-[36px] shrink-0 flex items-start pt-[12px] pl-[12px] gap-[10px]">
        <span className="w-[11px] h-[11px] rounded-full bg-[#e5392f]" />
        <span className="w-[11px] h-[11px] rounded-full bg-[#e8a823]" />
        <span className="w-[11px] h-[11px] rounded-full bg-[#069b5a]" />
      </div>
      <div className="mx-[12px] h-[1095px] rounded-[6px] overflow-hidden flex flex-col">
        <Header />
        <div className="flex-1 min-h-0 flex">
          <Sidebar />
          <main className="flex-1 relative overflow-hidden">
            <Map />
            <MapTools />
            <MapTooltip />
            <MapLegend />
            <MapboxMark />
          </main>
          <ZipPanel />
          <Rail />
        </div>
      </div>
    </div>
  );
}
